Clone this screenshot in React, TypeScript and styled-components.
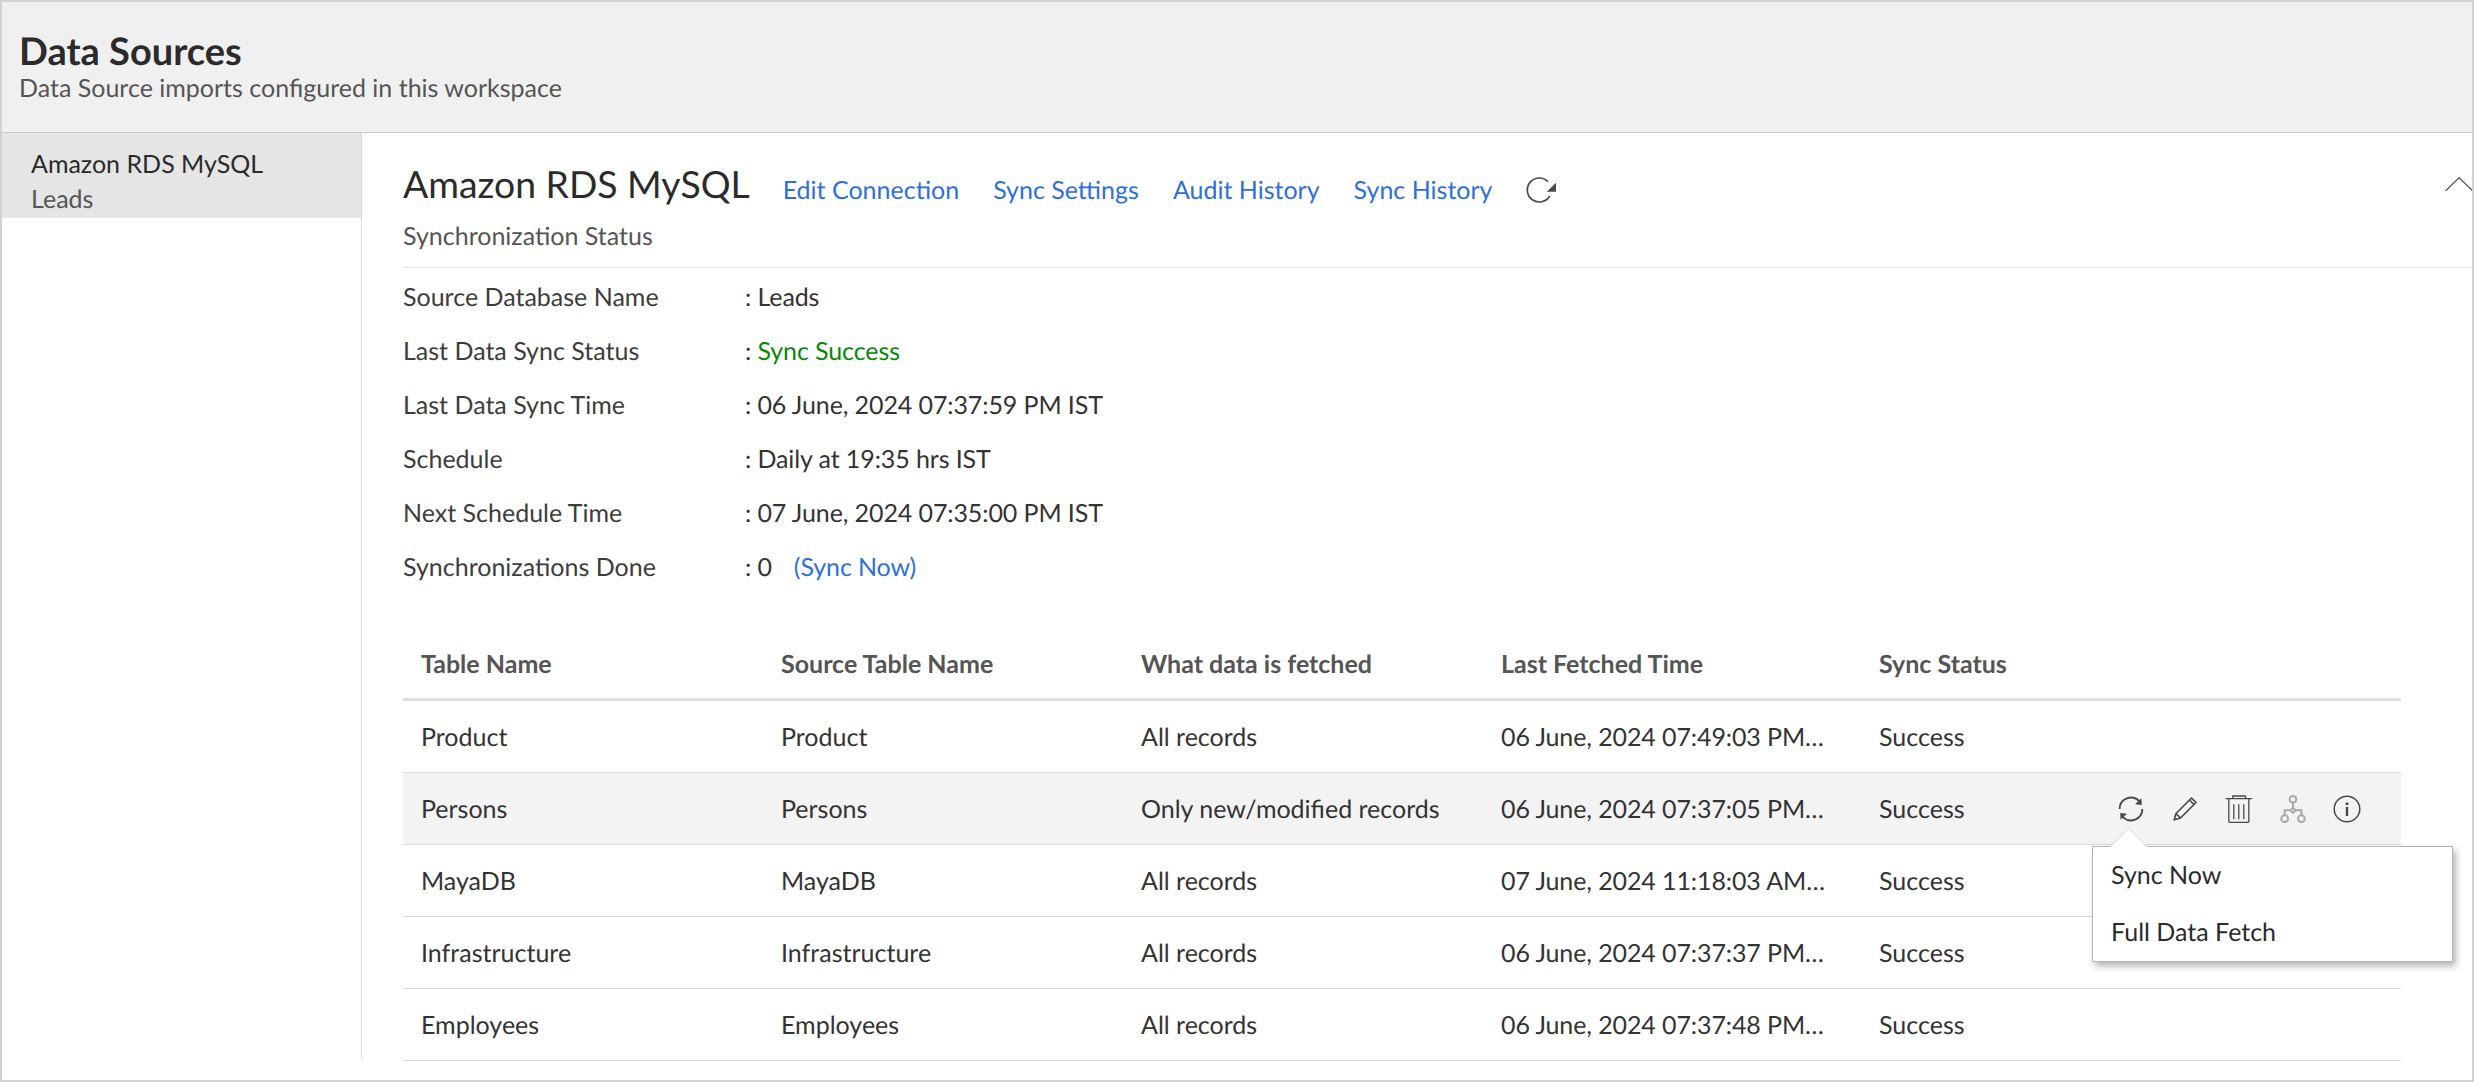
import React from "react";
import styled, { createGlobalStyle } from "styled-components";

const details = [
  { label: "Source Database Name", value: "Leads" },
  { label: "Last Data Sync Status", value: "Sync Success", success: true },
  { label: "Last Data Sync Time", value: "06 June, 2024 07:37:59 PM IST" },
  { label: "Schedule", value: "Daily at 19:35 hrs IST" },
  { label: "Next Schedule Time", value: "07 June, 2024 07:35:00 PM IST" },
  { label: "Synchronizations Done", value: "0", syncLink: true },
];

const rows = [
  { name: "Product", fetched: "All records", time: "06 June, 2024 07:49:03 PM IST" },
  { name: "Persons", fetched: "Only new/modified records", time: "06 June, 2024 07:37:05 PM IST", active: true },
  { name: "MayaDB", fetched: "All records", time: "07 June, 2024 11:18:03 AM IST" },
  { name: "Infrastructure", fetched: "All records", time: "06 June, 2024 07:37:37 PM IST" },
  { name: "Employees", fetched: "All records", time: "06 June, 2024 07:37:48 PM IST" },
];

const App: React.FC = () => {
  return (
    <Page>
      <GlobalStyle />
      <Header>
        <PageTitle>Data Sources</PageTitle>
        <PageSubtitle>Data Source imports configured in this workspace</PageSubtitle>
      </Header>
      <Body>
        <Sidebar>
          <SideItem>
            <SideName>Amazon RDS MySQL</SideName>
            <SideSub>Leads</SideSub>
          </SideItem>
        </Sidebar>
        <Main>
          <Collapse viewBox="0 0 28 14">
            <path d="M0.5 14 L14 0.7 L28 14" fill="none" stroke="#555" strokeWidth="1.2" />
          </Collapse>
          <TitleRow>
            <SourceName>Amazon RDS MySQL</SourceName>
            <Links>
              <HeadLink>Edit Connection</HeadLink>
              <HeadLink>Sync Settings</HeadLink>
              <HeadLink>Audit History</HeadLink>
              <HeadLink>Sync History</HeadLink>
            </Links>
            <RefreshIcon />
          </TitleRow>
          <StatusLine>Synchronization Status</StatusLine>
          <DetailList>
            {details.map((d) => (
              <DetailRow key={d.label}>
                <DetailLabel>{d.label}</DetailLabel>
                <DetailValue>
                  : {d.success ? <SuccessText>{d.value}</SuccessText> : d.value}
                  {d.syncLink && <SyncNowLink>(Sync Now)</SyncNowLink>}
                </DetailValue>
              </DetailRow>
            ))}
          </DetailList>
          <Table>
            <TableHead>
              <HeadCell>Table Name</HeadCell>
              <HeadCell>Source Table Name</HeadCell>
              <HeadCell>What data is fetched</HeadCell>
              <HeadCell>Last Fetched Time</HeadCell>
              <HeadCell>Sync Status</HeadCell>
            </TableHead>
            {rows.map((r) => (
              <TableRow key={r.name} $active={r.active}>
                <Cell>{r.name}</Cell>
                <Cell>{r.name}</Cell>
                <Cell>{r.fetched}</Cell>
                <TimeCell>{r.time}</TimeCell>
                <Cell>Success</Cell>
                {r.active && (
                  <Actions>
                    <SyncIcon />
                    <PencilIcon />
                    <TrashIcon />
                    <TreeIcon />
                    <InfoIcon />
                    <Popup>
                      <PopupItem>Sync Now</PopupItem>
                      <PopupItem>Full Data Fetch</PopupItem>
                    </Popup>
                  </Actions>
                )}
              </TableRow>
            ))}
          </Table>
        </Main>
      </Body>
    </Page>
  );
};

// Icons

const RefreshIcon = () => (
  <RefreshSvg viewBox="0 0 32 28">
    <path d="M23 5.7 A12 12 0 1 0 24.7 20" fill="none" stroke="#4a4a4a" strokeWidth="1.7" />
    <path d="M21.7 15.7 H31 V6.7 Z" fill="#4a4a4a" />
  </RefreshSvg>
);

const SyncIcon = () => (
  <IconSvg viewBox="0 0 28 28">
    <path d="M2.6 14 A11.4 11.4 0 0 1 22.4 6.4" fill="none" stroke="#4a4a4a" strokeWidth="1.9" />
    <path d="M25.4 14 A11.4 11.4 0 0 1 5.6 21.6" fill="none" stroke="#4a4a4a" strokeWidth="1.9" />
    <path d="M24.4 3.2 L24.8 10 L18 9.2 Z" fill="#4a4a4a" />
    <path d="M3.6 24.8 L3.2 18 L10 18.8 Z" fill="#4a4a4a" />
  </IconSvg>
);

const PencilIcon = () => (
  <IconSvg viewBox="0 0 28 28">
    <path
      d="M3.2 24.8 L5 18.5 L20.5 3 L25 7.5 L9.5 23 Z M18.5 5 L23 9.5 M5 18.5 L9.5 23"
      fill="none"
      stroke="#4a4a4a"
      strokeWidth="1.7"
      strokeLinejoin="round"
    />
  </IconSvg>
);

const TrashIcon = () => (
  <IconSvg viewBox="0 0 28 28">
    <path
      d="M0.5 3.7 H27.2 M7.8 3.7 V1 H20.5 V3.7 M3.8 3.7 V26.2 Q3.8 27.4 5 27.4 H22.6 Q23.8 27.4 23.8 26.2 V3.7 M8.8 9.3 V24.3 M13.8 9.3 V24.3 M18.8 9.3 V24.3"
      fill="none"
      stroke="#4a4a4a"
      strokeWidth="1.3"
    />
  </IconSvg>
);

const TreeIcon = () => (
  <IconSvg viewBox="0 0 28 28">
    <g fill="none" stroke="#a6aab0" strokeWidth="2">
      <circle cx="14" cy="4.3" r="3.3" />
      <circle cx="5.7" cy="23.7" r="3.4" />
      <circle cx="22.4" cy="23.7" r="3.4" />
      <path d="M14 7.6 V12.8 M5.7 20.3 V15.3 H11.5 M16.5 15.3 H22.4 V20.3" />
      <path d="M14 12.8 L16.5 15.3 L14 17.8 L11.5 15.3 Z" />
    </g>
  </IconSvg>
);

const InfoIcon = () => (
  <IconSvg viewBox="0 0 28 28">
    <circle cx="14" cy="14" r="12.8" fill="none" stroke="#4a4a4a" strokeWidth="1.5" />
    <circle cx="14" cy="8.7" r="1.5" fill="#4a4a4a" />
    <path d="M14 12 V21" fill="none" stroke="#4a4a4a" strokeWidth="2.4" />
  </IconSvg>
);

// Styled Components

const GlobalStyle = createGlobalStyle`
  html, body {
    margin: 0;
    padding: 0;
    background: #fff;
    font-family: Lato, "Open Sans", sans-serif;
    text-rendering: geometricPrecision;
  }
  * {
    box-sizing: border-box;
  }
`;

const Page = styled.div`
  display: flex;
  flex-direction: column;
  width: 2474px;
  height: 1082px;
  border: 2px solid #d2d2d2;
  overflow: hidden;
  background: #fff;
  color: #333;
`;

const Header = styled.header`
  flex: 0 0 131px;
  padding: 28px 0 0 17px;
  background: #f0f0f0;
  border-bottom: 1px solid #c8c8c8;
`;

const PageTitle = styled.h1`
  margin: 0;
  font-size: 38px;
  line-height: 42px;
  font-weight: 700;
  color: #2b2b2b;
`;

const PageSubtitle = styled.div`
  font-size: 25px;
  line-height: 32px;
  color: #555;
`;

const Body = styled.div`
  display: flex;
  flex: 1;
  align-items: flex-start;
`;

const Sidebar = styled.aside`
  flex: 0 0 360px;
  height: 927px;
  border-right: 1px solid #dcdcdc;
`;

const SideItem = styled.div`
  height: 85px;
  padding: 14px 0 0 29px;
  background: #e5e5e5;
`;

const SideName = styled.div`
  font-size: 25px;
  line-height: 35px;
  color: #2b2b2b;
`;

const SideSub = styled.div`
  font-size: 25px;
  line-height: 35px;
  color: #555;
`;

const Main = styled.main`
  position: relative;
  flex: 1;
  padding: 0 71px 0 41px;
`;

const Collapse = styled.svg`
  position: absolute;
  top: 44px;
  right: -1px;
  width: 28px;
  height: 14px;
`;

const TitleRow = styled.div`
  display: flex;
  align-items: center;
  height: 76px;
  padding-top: 26px;
`;

const SourceName = styled.h2`
  margin: 0;
  font-size: 37.35px;
  line-height: 48px;
  font-weight: 400;
  color: #2b2b2b;
`;

const Links = styled.div`
  display: flex;
  gap: 34px;
  margin-left: 33px;
  padding-top: 11px;
`;

const HeadLink = styled.a`
  font-size: 25px;
  color: #2f6fdb;
  cursor: pointer;
`;

const RefreshSvg = styled.svg`
  width: 32px;
  height: 28px;
  margin: 12px 0 0 33px;
`;

const StatusLine = styled.div`
  height: 59px;
  margin-right: -71px;
  padding-top: 10px;
  font-size: 25px;
  line-height: 34px;
  color: #555;
  border-bottom: 1px solid #e0e0e0;
`;

const DetailList = styled.div`
  margin-top: 1px;
`;

const DetailRow = styled.div`
  display: grid;
  grid-template-columns: 342px 1fr;
  height: 54px;
  align-items: center;
  padding-top: 1px;
  font-size: 25px;
`;

const DetailLabel = styled.div`
  color: #3d3d3d;
`;

const DetailValue = styled.div`
  color: #333;
  letter-spacing: -0.1px;
`;

const SuccessText = styled.span`
  color: #0a870a;
`;

const SyncNowLink = styled.a`
  margin-left: 22px;
  color: #2f6fdb;
  cursor: pointer;
`;

const Table = styled.div`
  margin-top: 42px;
`;

const columns = "360px 360px 360px 378px 1fr";

const TableHead = styled.div`
  display: grid;
  grid-template-columns: ${columns};
  align-items: center;
  height: 66px;
  padding-bottom: 5px;
  border-bottom: 3px solid #dedede;
`;

const HeadCell = styled.div`
  padding-left: 18px;
  font-size: 25px;
  font-weight: 700;
  color: #555;
`;

const TableRow = styled.div<{ $active?: boolean }>`
  display: grid;
  grid-template-columns: ${columns} 1fr;
  align-items: center;
  height: 72px;
  background: ${(p) => (p.$active ? "#f3f3f3" : "transparent")};
  border-bottom: 1px solid #dcdcdc;
`;

const Cell = styled.div`
  padding: 1px 0 0 18px;
  font-size: 25px;
  color: #333;
  white-space: nowrap;
`;

const TimeCell = styled(Cell)`
  padding-right: 32px;
  letter-spacing: -0.1px;
  overflow: hidden;
  text-overflow: ellipsis;
`;

const Actions = styled.div`
  position: relative;
  display: flex;
  justify-content: flex-end;
  align-items: center;
  gap: 26px;
  padding-right: 40px;
`;

const IconSvg = styled.svg`
  width: 28px;
  height: 28px;
  flex: none;
`;

const Popup = styled.div`
  position: absolute;
  top: 51px;
  right: -52px;
  width: 361px;
  height: 116px;
  background: #fff;
  border: 1px solid #b2b5bc;
  box-shadow: 3px 4px 7px rgba(0, 0, 0, 0.3);
  z-index: 2;

  &::before {
    content: "";
    position: absolute;
    top: -14px;
    left: 22px;
    width: 26px;
    height: 26px;
    background: #fff;
    border-top: 1px solid #d5d5d5;
    border-left: 1px solid #d5d5d5;
    transform: rotate(45deg);
  }
`;

const PopupItem = styled.div`
  position: relative;
  height: 57px;
  padding-left: 18px;
  font-size: 25px;
  line-height: 57px;
  color: #2b2b2b;
`;

export default App;
